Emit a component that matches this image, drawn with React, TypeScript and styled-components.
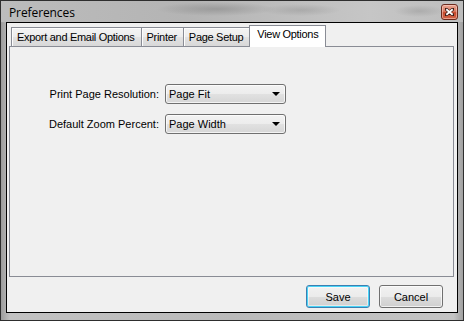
import React from "react";
import styled, { createGlobalStyle } from "styled-components";

const GlobalStyle = createGlobalStyle`
  html, body {
    margin: 0;
    padding: 0;
    background: #ffffff;
  }
  body {
    font-family: "Liberation Sans", Arial, sans-serif;
    font-size: 11px;
    color: #000;
  }
`;

const Window = styled.div`
  box-sizing: border-box;
  width: 464px;
  height: 321px;
  border: 1px solid #2e2e2e;
  padding: 0 5px 7px 5px;
  background: linear-gradient(90deg, #9c9c9c 0%, #c2c2c2 2%, #bababa 50%, #c4c4c4 98%, #a0a0a0 100%);
  display: flex;
  flex-direction: column;
`;

const TitleBar = styled.div`
  height: 21px;
  margin: 0 -5px;
  padding: 0 5px 0 8px;
  display: flex;
  align-items: center;
  justify-content: space-between;
  background:
    radial-gradient(ellipse 60px 7px at 215px 8px, rgba(120, 120, 120, 0.45), transparent),
    radial-gradient(ellipse 40px 6px at 300px 9px, rgba(130, 130, 130, 0.35), transparent),
    radial-gradient(ellipse 25px 6px at 418px 10px, rgba(140, 140, 140, 0.4), transparent),
    linear-gradient(90deg, #bcbcbc 0%, #b4b4b4 40%, #c6c6c6 80%, #bdbdbd 100%);
`;

const Title = styled.span`
  font-family: "Open Sans", "Liberation Sans", sans-serif;
  font-size: 12px;
  letter-spacing: -0.1px;
  color: #000;
  margin-top: 1px;
`;

const CloseButton = styled.div`
  box-sizing: border-box;
  width: 17px;
  height: 16px;
  margin-top: 1px;
  border: 1px solid #6b2a1e;
  border-radius: 3px;
  background: linear-gradient(#eaa593 0%, #d97a63 45%, #c5472b 55%, #d2664a 100%);
  box-shadow: inset 0 0 0 1px rgba(255, 220, 210, 0.5);
  display: flex;
  align-items: center;
  justify-content: center;
`;

const Client = styled.div`
  flex: 1;
  border: 1px solid #000;
  background: #f0f0f0;
  padding: 2px 3px 0 2px;
  display: flex;
  flex-direction: column;
`;

const TabStrip = styled.div`
  height: 21px;
  padding-left: 2px;
  display: flex;
  align-items: flex-end;
  position: relative;
  z-index: 1;
`;

const Tab = styled.div<{ $active?: boolean }>`
  box-sizing: border-box;
  height: ${(p) => (p.$active ? "22px" : "19px")};
  margin: ${(p) => (p.$active ? "0 -2px -1px -2px" : "0")};
  padding: ${(p) => (p.$active ? "2px 7px 0 7px" : "3px 6px 0 5px")};
  border: 1px solid #898c95;
  border-bottom: none;
  background: ${(p) =>
    p.$active
      ? "#ffffff"
      : "linear-gradient(#f4f4f4 0%, #ececec 50%, #e2e2e2 51%, #d8d8d8 100%)"};
  box-shadow: ${(p) => (p.$active ? "none" : "inset 1px 1px 0 #fdfdfd")};
  white-space: nowrap;
  letter-spacing: -0.3px;

  & + & {
    margin-left: ${(p) => (p.$active ? "-1px" : "2px")};
  }
`;

const Panel = styled.div`
  box-sizing: border-box;
  height: 231px;
  border: 1px solid #898c95;
  background: #f0f0f0;
  padding-top: 37px;
`;

const Form = styled.div`
  display: grid;
  grid-template-columns: 149px 121px;
  column-gap: 6px;
  row-gap: 10px;
  align-items: center;
`;

const Label = styled.label`
  justify-self: end;
  white-space: nowrap;
`;

const Combo = styled.div`
  box-sizing: border-box;
  height: 20px;
  border: 1px solid #707070;
  border-radius: 3px;
  background: linear-gradient(#f3f3f3 0%, #ececec 50%, #e1e1e1 51%, #d6d6d6 100%);
  box-shadow: inset 0 0 0 1px rgba(255, 255, 255, 0.7);
  padding: 0 5px 0 3px;
  display: flex;
  align-items: center;
  justify-content: space-between;
`;

const Arrow = styled.span`
  width: 0;
  height: 0;
  border-left: 4px solid transparent;
  border-right: 4px solid transparent;
  border-top: 4px solid #000;
`;

const ButtonRow = styled.div`
  flex: 1;
  padding: 8px 11px 0 0;
  display: flex;
  justify-content: flex-end;
  align-items: flex-start;
  gap: 9px;
`;

const Button = styled.div<{ $default?: boolean }>`
  box-sizing: border-box;
  width: 64px;
  height: 23px;
  border: 1px solid ${(p) => (p.$default ? "#3c7fb1" : "#707070")};
  border-radius: 3px;
  background: linear-gradient(#f2f2f2 0%, #ebebeb 50%, #dddddd 51%, #cfcfcf 100%);
  box-shadow: ${(p) =>
    p.$default
      ? "inset 0 0 0 1px #48d4f7, inset 0 0 0 2px rgba(255,255,255,0.5)"
      : "inset 0 0 0 1px rgba(255,255,255,0.7)"};
  display: flex;
  align-items: center;
  justify-content: center;
`;

const tabs = ["Export and Email Options", "Printer", "Page Setup", "View Options"];

export default function App() {
  return (
    <>
      <GlobalStyle />
      <Window>
        <TitleBar>
          <Title>Preferences</Title>
          <CloseButton>
            <svg width="9" height="8" viewBox="0 0 9 8">
              <path
                d="M1 1 L8 7 M8 1 L1 7"
                stroke="#3a1a14"
                strokeWidth="3.2"
                strokeLinecap="round"
              />
              <path d="M1.3 1.2 L7.7 6.8 M7.7 1.2 L1.3 6.8" stroke="#ffffff" strokeWidth="1.8" />
            </svg>
          </CloseButton>
        </TitleBar>
        <Client>
          <TabStrip>
            {tabs.map((t, i) => (
              <Tab key={t} $active={i === 3}>
                {t}
              </Tab>
            ))}
          </TabStrip>
          <Panel>
            <Form>
              <Label>Print Page Resolution:</Label>
              <Combo>
                <span>Page Fit</span>
                <Arrow />
              </Combo>
              <Label>Default Zoom Percent:</Label>
              <Combo>
                <span>Page Width</span>
                <Arrow />
              </Combo>
            </Form>
          </Panel>
          <ButtonRow>
            <Button $default>Save</Button>
            <Button>Cancel</Button>
          </ButtonRow>
        </Client>
      </Window>
    </>
  );
}
